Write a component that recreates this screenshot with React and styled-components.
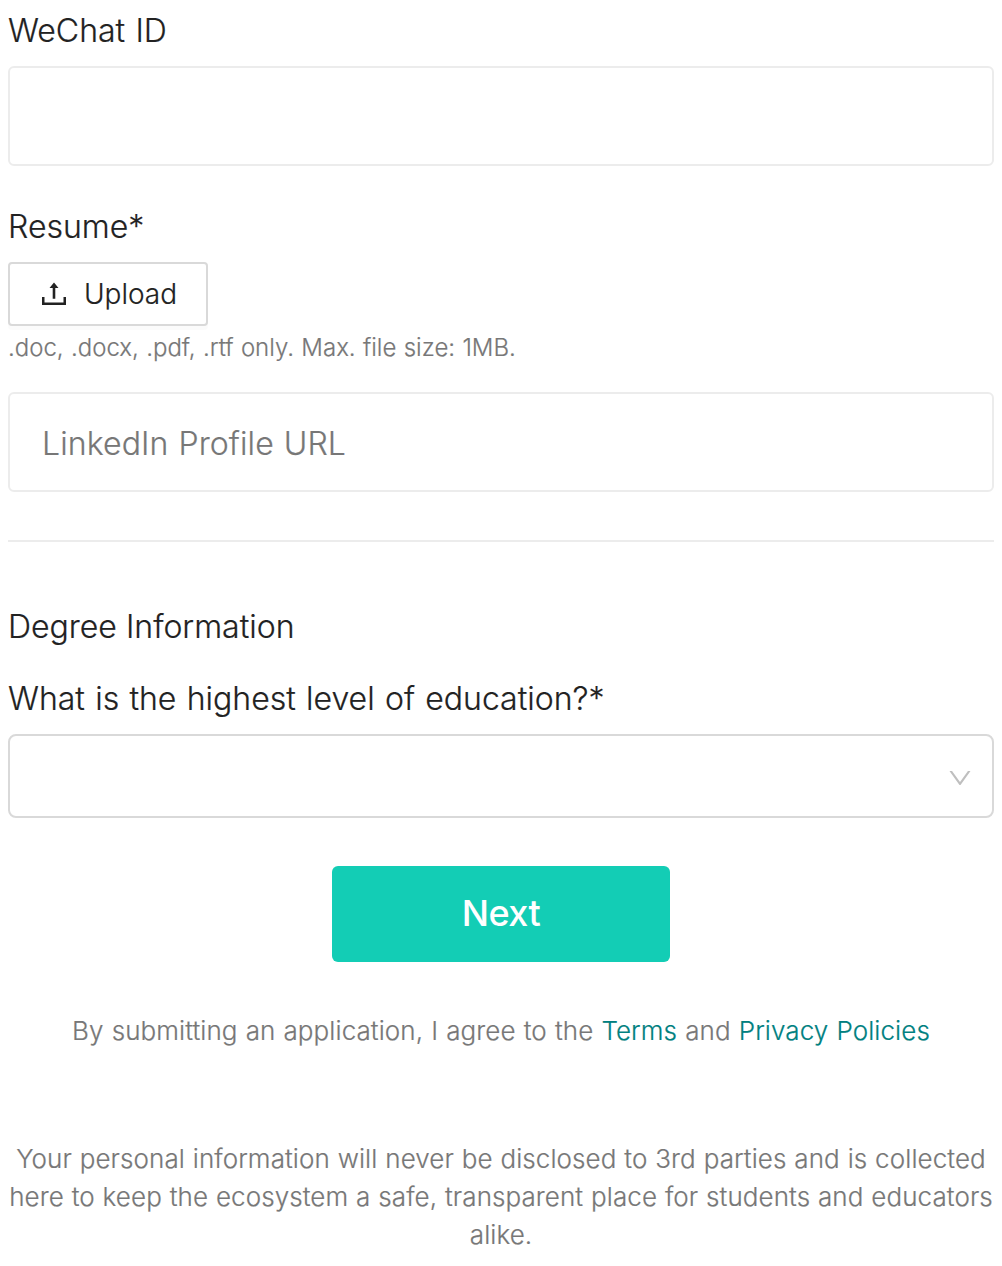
import React from "react";
import styled, { createGlobalStyle } from "styled-components";

const GlobalStyle = createGlobalStyle`
  *, *::before, *::after { box-sizing: border-box; }
  body {
    margin: 0;
    background: #fff;
    color: #222;
    font-family: Inter, "Noto Sans", sans-serif;
    font-weight: 300;
    -webkit-text-stroke: 0.2px currentColor;
  }
`;

const Form = styled.form`
  display: flex;
  flex-direction: column;
  padding: 7px 8px 0;
`;

const Field = styled.div`
  display: flex;
  flex-direction: column;
  align-items: stretch;
  margin-bottom: ${(p) => p.$gap}px;
`;

const Label = styled.label`
  font-size: 32px;
  line-height: 48px;
  margin-bottom: 11px;
  word-spacing: 1.3px;
`;

const TextInput = styled.input`
  width: 100%;
  height: 100px;
  padding: 2px 32px 0;
  border: 2px solid #ececec;
  border-radius: 6px;
  background: #fff;
  color: #222;
  font: inherit;
  font-size: 32px;
  letter-spacing: 0.12px;
  word-spacing: 0.8px;
  outline: none;
  &::placeholder { color: #777; opacity: 1; }
`;

const UploadButton = styled.button`
  display: flex;
  align-items: center;
  align-self: flex-start;
  width: 200px;
  height: 64px;
  padding: 0 0 0 30px;
  gap: 16px;
  border: 2px solid #d9d9d9;
  border-radius: 4px;
  background: #fff;
  box-shadow: 0 4px 0 rgba(0, 0, 0, 0.016);
  color: #222;
  font: inherit;
  font-size: 28px;
  white-space: nowrap;

  svg { flex: none; }
`;

const Hint = styled.div`
  padding-top: 1px;
  font-size: 24px;
  line-height: 42px;
  color: #777;
  word-spacing: 0.6px;
`;

const Divider = styled.hr`
  width: 100%;
  height: 2px;
  margin: 0 0 61px;
  border: 0;
  background: #ececec;
`;

const SectionTitle = styled.h2`
  margin: 0 0 24px;
  font-size: 32px;
  font-weight: inherit;
  line-height: 48px;
`;

const Select = styled.div`
  display: flex;
  align-items: center;
  justify-content: flex-end;
  height: 84px;
  padding: 4px 18px 0 20px;
  border: 2px solid #d9d9d9;
  border-radius: 8px;
  color: #bfbfbf;
`;

const NextButton = styled.button`
  align-self: center;
  width: 338px;
  height: 96px;
  padding: 0 0 2px;
  border: 0;
  border-radius: 6px;
  background: #13cdb5;
  color: #fff;
  font: inherit;
  font-size: 36px;
  font-weight: 500;
  letter-spacing: -0.5px;
  -webkit-text-stroke: 0;
`;

const Note = styled.p`
  margin: ${(p) => p.$top}px 0 0;
  font-size: 26px;
  line-height: 38px;
  text-align: center;
  color: #777;
  letter-spacing: 0.08px;
  word-spacing: ${(p) => p.$wordGap}px;
`;

const Link = styled.a`
  color: #008080;
  text-decoration: none;
`;

const UploadIcon = () => (
  <svg width="28" height="28" viewBox="0 0 28 28" fill="currentColor" aria-hidden="true">
    <path d="M14 2.6 L18.5 8 H15.3 V18.7 H12.7 V8 H9.5 Z" />
    <path d="M2 17 H4.5 V22.6 H23.5 V17 H26 V25 H2 Z" />
  </svg>
);

const DownIcon = () => (
  <svg width="28" height="28" viewBox="0 0 1024 1024" fill="currentColor" aria-hidden="true">
    <path d="M884 256h-75c-5.1 0-9.9 2.5-12.9 6.6L512 654.2 227.9 262.6c-3-4.1-7.8-6.6-12.9-6.6h-75c-6.5 0-10.3 7.4-6.5 12.7l352.6 486.1c12.8 17.6 39 17.6 51.7 0l352.6-486.1c3.9-5.3.1-12.7-6.4-12.7z" />
  </svg>
);

export default function App() {
  return (
    <>
      <GlobalStyle />
      <Form onSubmit={(e) => e.preventDefault()}>
        <Field $gap={37}>
          <Label htmlFor="wechat">WeChat ID</Label>
          <TextInput id="wechat" />
        </Field>
        <Field $gap={23}>
          <Label as="div">Resume*</Label>
          <UploadButton type="button">
            <UploadIcon />
            Upload
          </UploadButton>
          <Hint>.doc, .docx, .pdf, .rtf only. Max. file size: 1MB.</Hint>
        </Field>
        <Field $gap={48}>
          <TextInput placeholder="LinkedIn Profile URL" />
        </Field>
        <Divider />
        <SectionTitle>Degree Information</SectionTitle>
        <Field $gap={48}>
          <Label as="div">What is the highest level of education?*</Label>
          <Select role="combobox">
            <DownIcon />
          </Select>
        </Field>
        <NextButton type="submit">Next</NextButton>
        <Note $top={50} $wordGap={0.7}>
          By submitting an application, I agree to the <Link href="#">Terms</Link> and{" "}
          <Link href="#">Privacy Policies</Link>
        </Note>
        <Note $top={90} $wordGap={0.45}>
          Your personal information will never be disclosed to 3rd parties and is collected here to
          keep the ecosystem a safe, transparent place for students and educators alike.
        </Note>
      </Form>
    </>
  );
}
